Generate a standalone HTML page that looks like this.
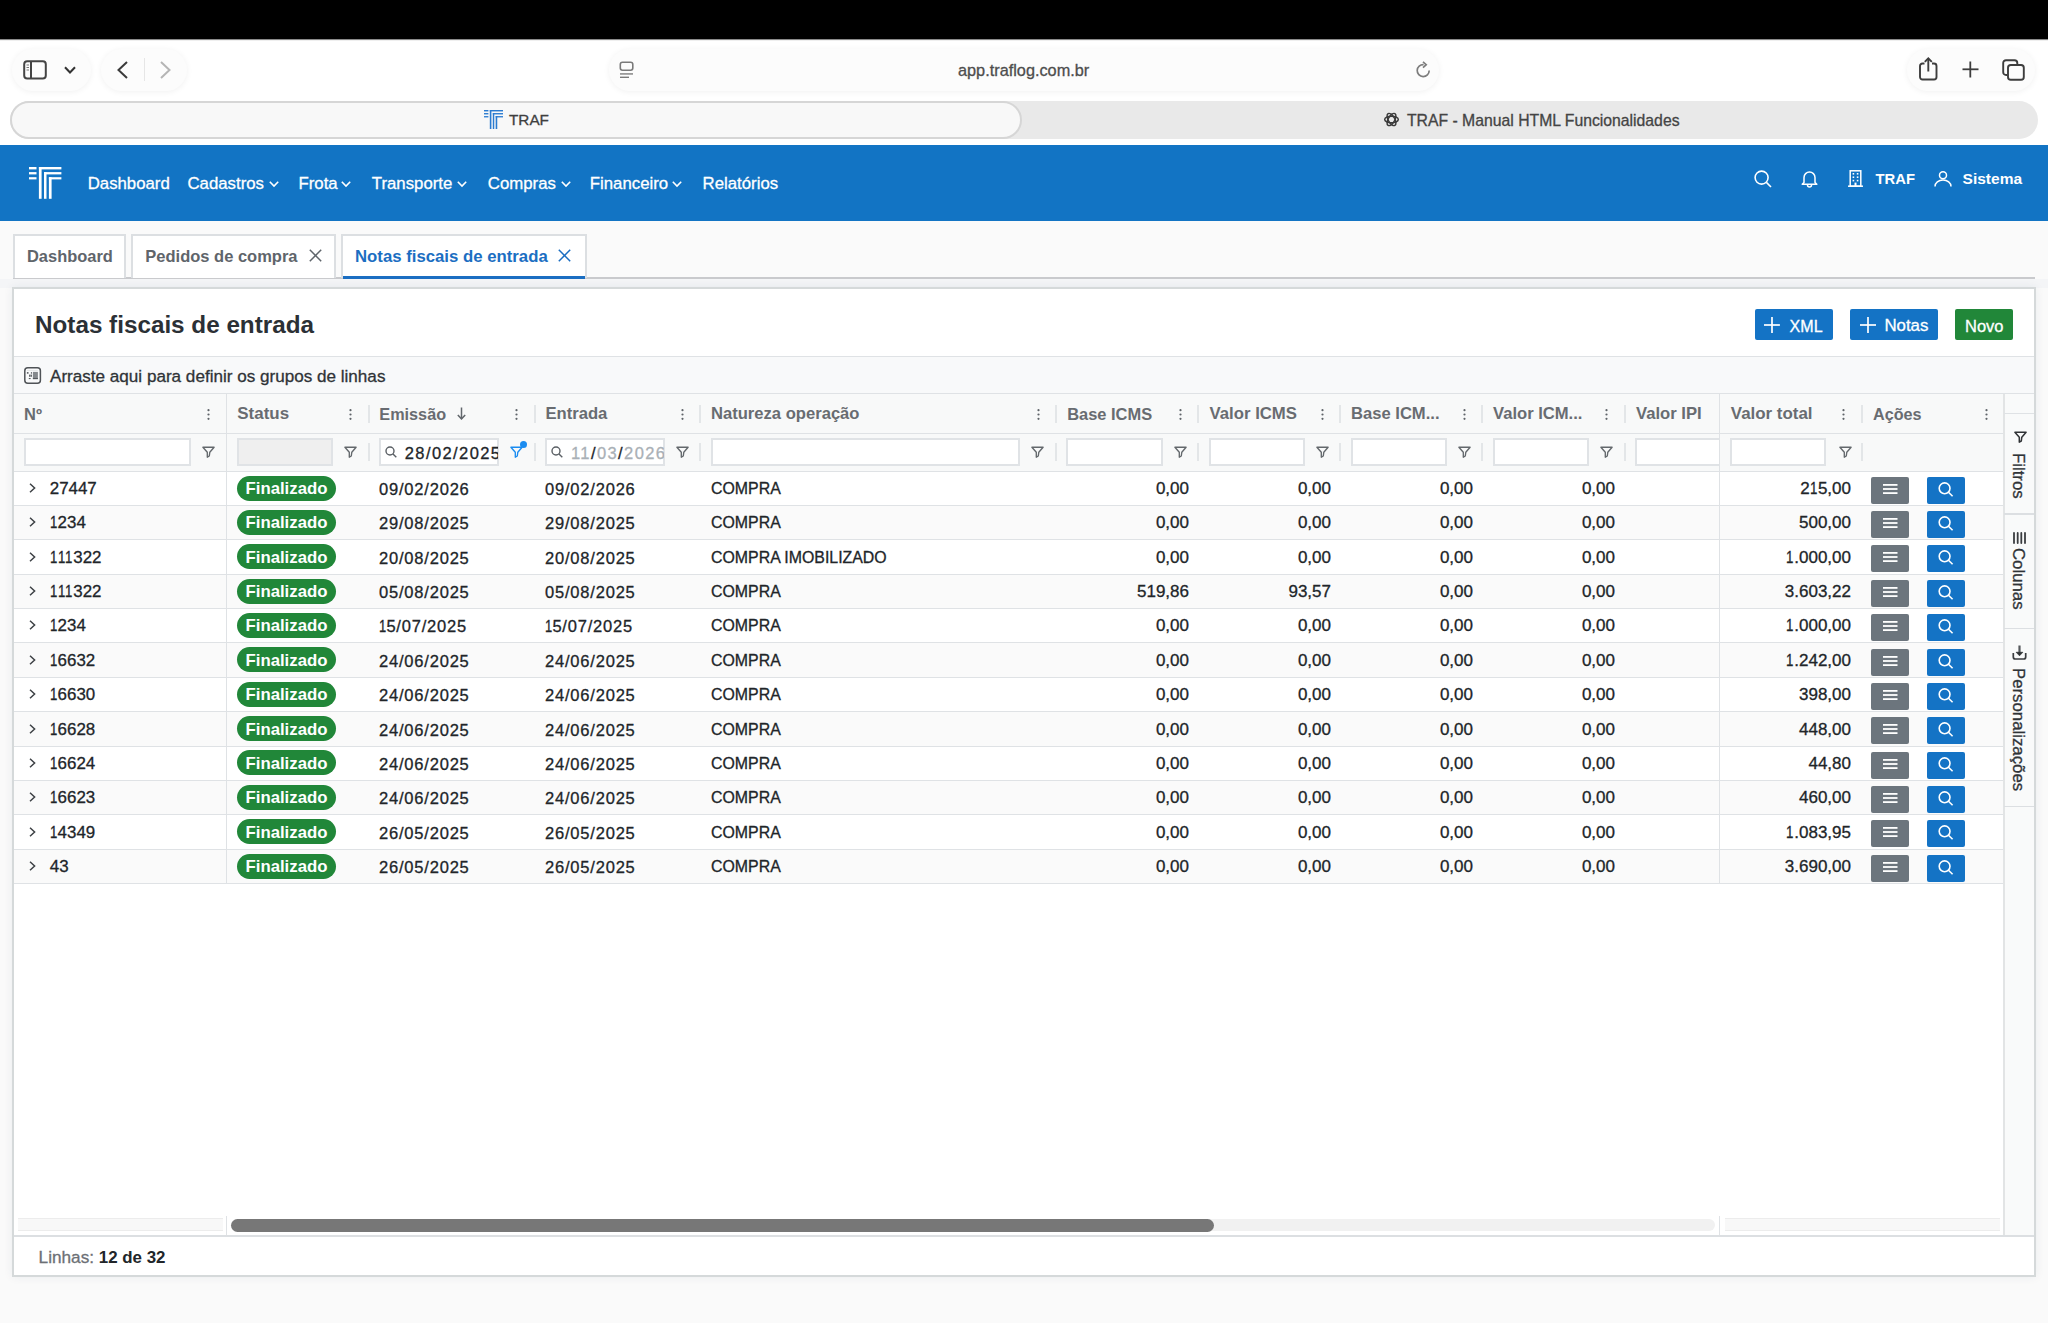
<!DOCTYPE html><html><head><meta charset="utf-8"><style>
*{box-sizing:border-box;margin:0;padding:0}
html,body{width:2048px;height:1323px;overflow:hidden;background:#fafafa;font-family:"Liberation Sans",sans-serif;color:#212529}
.a{position:absolute}
.t{position:absolute;white-space:nowrap;line-height:20px;height:20px;-webkit-text-stroke-width:0.3px}
[style*="font-weight:700"]{-webkit-text-stroke-width:0}
svg{position:absolute;overflow:visible}
</style></head><body><div class="a" style="left:0;top:0;width:2048px;height:39px;background:#000"></div>
<div class="a" style="left:0;top:39px;width:2048px;height:106px;background:#fff"></div>
<div class="a" style="left:0;top:39px;width:2048px;height:1px;background:#8a8a8a"></div>
<div class="a" style="left:0;top:40px;width:2048px;height:1px;background:#efefef"></div>
<div class="a" style="left:12px;top:49px;width:79px;height:42px;border-radius:21.0px;background:#fcfcfc;box-shadow:0 1px 6px rgba(0,0,0,0.06)"></div>
<div class="a" style="left:101px;top:49px;width:86px;height:42px;border-radius:21.0px;background:#fcfcfc;box-shadow:0 1px 6px rgba(0,0,0,0.06)"></div>
<div class="a" style="left:609px;top:49px;width:830px;height:42px;border-radius:21.0px;background:#fcfcfc;box-shadow:0 1px 6px rgba(0,0,0,0.06)"></div>
<div class="a" style="left:1907px;top:49px;width:128px;height:42px;border-radius:21.0px;background:#fcfcfc;box-shadow:0 1px 6px rgba(0,0,0,0.06)"></div>
<svg style="left:23px;top:60px" width="24" height="20" viewBox="0 0 24 20">
<rect x="1.2" y="1.2" width="21.6" height="17.2" rx="3" fill="none" stroke="#444" stroke-width="2"/>
<line x1="8" y1="1.5" x2="8" y2="18.5" stroke="#444" stroke-width="2"/>
<line x1="3.5" y1="5" x2="6" y2="5" stroke="#777" stroke-width="1"/>
<line x1="3.5" y1="7.5" x2="6" y2="7.5" stroke="#777" stroke-width="1"/>
<line x1="3.5" y1="10" x2="6" y2="10" stroke="#777" stroke-width="1"/>
</svg>
<svg style="left:64px;top:66px" width="12" height="8" viewBox="0 0 12 8"><polyline points="1,1.2 6,6.5 11,1.2" fill="none" stroke="#333" stroke-width="2"/></svg>
<svg style="left:117px;top:61px" width="11" height="18" viewBox="0 0 11 18"><polyline points="10,1 1.5,9 10,17" fill="none" stroke="#3a3a3a" stroke-width="2"/></svg>
<div class="a" style="left:144px;top:58px;width:1px;height:23px;background:#e6e6e6"></div>
<svg style="left:160px;top:61px" width="11" height="18" viewBox="0 0 11 18"><polyline points="1,1 9.5,9 1,17" fill="none" stroke="#b5b5b5" stroke-width="2"/></svg>
<svg style="left:619px;top:61px" width="16" height="18" viewBox="0 0 16 18">
<rect x="1.3" y="1.3" width="12.5" height="8" rx="2.2" fill="none" stroke="#7a7a7a" stroke-width="1.6"/>
<rect x="1" y="12" width="13" height="1.8" fill="#9a9a9a"/>
<rect x="1" y="15.6" width="9" height="1.4" fill="#7a7a7a"/>
</svg>
<div class="t" style="left:958px;top:60px;font-size:16.3px;color:#4d4d4d">app.traflog.com.br</div>
<svg style="left:1415px;top:61px" width="18" height="18" viewBox="0 0 18 18">
<path d="M14.2 9.6 A6 6 0 1 1 8.6 3.6" fill="none" stroke="#7d7d7d" stroke-width="1.7"/>
<polyline points="8,0.8 11.2,3.7 8,6.6" fill="none" stroke="#7d7d7d" stroke-width="1.7"/>
</svg>
<svg style="left:1919px;top:57px" width="19" height="24" viewBox="0 0 19 24">
<path d="M5.5 6.5 H3.5 A2.5 2.5 0 0 0 1 9 V20 A2.5 2.5 0 0 0 3.5 22.5 H15 A2.5 2.5 0 0 0 17.5 20 V9 A2.5 2.5 0 0 0 15 6.5 H13" fill="none" stroke="#3d3d3d" stroke-width="1.9"/>
<line x1="9.3" y1="1.5" x2="9.3" y2="14.5" stroke="#3d3d3d" stroke-width="1.9"/>
<polyline points="5.8,4.8 9.3,1.3 12.8,4.8" fill="none" stroke="#3d3d3d" stroke-width="1.9"/>
</svg>
<svg style="left:1962px;top:61px" width="17" height="17" viewBox="0 0 17 17"><line x1="8.3" y1="0.5" x2="8.3" y2="16.5" stroke="#3d3d3d" stroke-width="1.8"/><line x1="0.5" y1="8.3" x2="16.5" y2="8.3" stroke="#3d3d3d" stroke-width="1.8"/></svg>
<svg style="left:2002px;top:59px" width="23" height="22" viewBox="0 0 23 22">
<path d="M5 16 H4 A2.8 2.8 0 0 1 1.2 13.2 V4 A2.8 2.8 0 0 1 4 1.2 H12.5 A2.8 2.8 0 0 1 15.3 4 V5" fill="none" stroke="#3d3d3d" stroke-width="1.9"/>
<rect x="6" y="6" width="15.8" height="14.8" rx="2.8" fill="none" stroke="#3d3d3d" stroke-width="1.9"/>
</svg>
<div class="a" style="left:10px;top:101px;width:2028px;height:38px;border-radius:19px;background:#e9e9e9"></div>
<div class="a" style="left:10px;top:101px;width:1012px;height:38px;border-radius:19px;background:#f8f8f8;border:2px solid #d6d6d6"></div>
<svg style="left:484px;top:110px" width="19" height="19" viewBox="0 0 32.4 31.8" preserveAspectRatio="none">
<g fill="#2a7bd0">
<rect x="0" y="0" width="7.5" height="2.4"/>
<rect x="0" y="5.1" width="7.5" height="2.3"/>
<rect x="0" y="10.2" width="7.5" height="2.2"/>
<rect x="9.9" y="0" width="22.5" height="2.4"/>
<rect x="9.9" y="0" width="2.7" height="31.8"/>
<rect x="15" y="5.1" width="17.4" height="2.3"/>
<rect x="15" y="5.1" width="2.5" height="26.7"/>
<rect x="19.9" y="10.2" width="12.5" height="2.2"/>
<rect x="19.9" y="10.2" width="2.7" height="21.6"/>
</g></svg>
<div class="t" style="left:509px;top:110px;font-size:15.3px;color:#3f3f3f">TRAF</div>
<svg style="left:1383px;top:111px" width="17" height="17" viewBox="0 0 24 24">
<g fill="none" stroke="#3a3a3a" stroke-width="2.1">
<ellipse cx="12" cy="12" rx="4.6" ry="9.6" transform="rotate(30 12 12)"/>
<ellipse cx="12" cy="12" rx="4.6" ry="9.6" transform="rotate(90 12 12)"/>
<ellipse cx="12" cy="12" rx="4.6" ry="9.6" transform="rotate(150 12 12)"/>
</g></svg>
<div class="t" style="left:1407px;top:111px;font-size:15.75px;color:#444">TRAF - Manual HTML Funcionalidades</div>
<div class="a" style="left:0;top:145px;width:2048px;height:76px;background:#1274c4"></div>
<svg style="left:29.4px;top:167px" width="32.4" height="31.8" viewBox="0 0 32.4 31.8" preserveAspectRatio="none">
<g fill="#fff">
<rect x="0" y="0" width="7.5" height="2.4"/>
<rect x="0" y="5.1" width="7.5" height="2.3"/>
<rect x="0" y="10.2" width="7.5" height="2.2"/>
<rect x="9.9" y="0" width="22.5" height="2.4"/>
<rect x="9.9" y="0" width="2.7" height="31.8"/>
<rect x="15" y="5.1" width="17.4" height="2.3"/>
<rect x="15" y="5.1" width="2.5" height="26.7"/>
<rect x="19.9" y="10.2" width="12.5" height="2.2"/>
<rect x="19.9" y="10.2" width="2.7" height="21.6"/>
</g></svg>
<div class="t" id="nav_Dashboard" style="left:87.7px;top:173.5px;font-size:16.8px;color:#fff">Dashboard</div>
<div class="t" id="nav_Cadastros" style="left:187.5px;top:173.5px;font-size:16.8px;color:#fff">Cadastros</div>
<div class="t" id="nav_Frota" style="left:298.5px;top:173.5px;font-size:16.8px;color:#fff">Frota</div>
<div class="t" id="nav_Transporte" style="left:371.8px;top:173.5px;font-size:16.8px;color:#fff">Transporte</div>
<div class="t" id="nav_Compras" style="left:487.8px;top:173.5px;font-size:16.8px;color:#fff">Compras</div>
<div class="t" id="nav_Financeiro" style="left:589.8px;top:173.5px;font-size:16.8px;color:#fff">Financeiro</div>
<div class="t" id="nav_Relatórios" style="left:702.6px;top:173.5px;font-size:16.8px;color:#fff">Relatórios</div>
<svg style="left:268.8px;top:181px" width="10" height="6" viewBox="0 0 10 6"><polyline points="0.8,0.8 5,5 9.2,0.8" fill="none" stroke="#fff" stroke-width="1.6"/></svg>
<svg style="left:341px;top:181px" width="10" height="6" viewBox="0 0 10 6"><polyline points="0.8,0.8 5,5 9.2,0.8" fill="none" stroke="#fff" stroke-width="1.6"/></svg>
<svg style="left:457px;top:181px" width="10" height="6" viewBox="0 0 10 6"><polyline points="0.8,0.8 5,5 9.2,0.8" fill="none" stroke="#fff" stroke-width="1.6"/></svg>
<svg style="left:561px;top:181px" width="10" height="6" viewBox="0 0 10 6"><polyline points="0.8,0.8 5,5 9.2,0.8" fill="none" stroke="#fff" stroke-width="1.6"/></svg>
<svg style="left:672px;top:181px" width="10" height="6" viewBox="0 0 10 6"><polyline points="0.8,0.8 5,5 9.2,0.8" fill="none" stroke="#fff" stroke-width="1.6"/></svg>
<svg style="left:1754px;top:170px" width="18" height="18" viewBox="0 0 18 18"><circle cx="7.6" cy="7.6" r="6.5" fill="none" stroke="#fff" stroke-width="1.6"/><line x1="12.4" y1="12.4" x2="17" y2="17" stroke="#fff" stroke-width="1.6"/></svg>
<svg style="left:1801px;top:170px" width="17" height="17" viewBox="0 0 17 17"><path d="M3 12.5 V7.5 A5.5 5.5 0 0 1 14 7.5 V12.5 L15.8 14.3 H1.2 Z" fill="none" stroke="#fff" stroke-width="1.5" stroke-linejoin="round"/><path d="M6.5 15 A2 2 0 0 0 10.5 15" fill="none" stroke="#fff" stroke-width="1.5"/></svg>
<svg style="left:1848px;top:170px" width="15" height="17" viewBox="0 0 15 17"><rect x="2.2" y="0.8" width="10.6" height="15.4" fill="none" stroke="#fff" stroke-width="1.5"/><line x1="0" y1="16.2" x2="15" y2="16.2" stroke="#fff" stroke-width="1.5"/>
<g fill="#fff"><rect x="4.6" y="3" width="1.6" height="1.6"/><rect x="8.8" y="3" width="1.6" height="1.6"/><rect x="4.6" y="6.4" width="1.6" height="1.6"/><rect x="8.8" y="6.4" width="1.6" height="1.6"/><rect x="4.6" y="9.8" width="1.6" height="1.6"/><rect x="8.8" y="9.8" width="1.6" height="1.6"/><rect x="6.5" y="12.6" width="2" height="3.6"/></g></svg>
<div class="t" style="left:1875.5px;top:169px;font-size:14.8px;font-weight:700;color:#fff">TRAF</div>
<svg style="left:1934px;top:171px" width="18" height="16" viewBox="0 0 18 16"><circle cx="9" cy="4.3" r="3.5" fill="none" stroke="#fff" stroke-width="1.5"/><path d="M1 15.5 A8 6.5 0 0 1 17 15.5" fill="none" stroke="#fff" stroke-width="1.5"/></svg>
<div class="t" style="left:1962.6px;top:169px;font-size:15.5px;font-weight:700;color:#fff">Sistema</div>
<div class="a" style="left:0;top:279px;width:2048px;height:9px;background:#f4f5f7"></div>
<div class="a" style="left:13px;top:277px;width:2022px;height:2px;background:#c9cacd"></div>
<div class="a" style="left:13px;top:234px;width:113px;height:44px;background:#fff;border:2px solid #dcdfe2;border-bottom:none"></div>
<div class="t" style="left:27px;top:246px;font-size:16.46px;font-weight:700;color:#5f656b">Dashboard</div>
<div class="a" style="left:131px;top:234px;width:205px;height:44px;background:#fff;border:2px solid #dcdfe2;border-bottom:none"></div>
<div class="t" style="left:145.3px;top:246px;font-size:16.5px;font-weight:700;color:#5f656b">Pedidos de compra</div>
<svg style="left:308.7px;top:249px" width="13" height="13" viewBox="0 0 13 13"><line x1="0.8" y1="0.8" x2="12.2" y2="12.2" stroke="#5f656b" stroke-width="1.5"/><line x1="12.2" y1="0.8" x2="0.8" y2="12.2" stroke="#5f656b" stroke-width="1.5"/></svg>
<div class="a" style="left:341px;top:234px;width:246px;height:44px;background:#fff;border:2px solid #dcdfe2;border-bottom:none"></div>
<div class="t" style="left:355px;top:246.5px;font-size:16.75px;font-weight:700;color:#1b6ec2">Notas fiscais de entrada</div>
<svg style="left:557.5px;top:249px" width="13" height="13" viewBox="0 0 13 13"><line x1="0.8" y1="0.8" x2="12.2" y2="12.2" stroke="#1b6ec2" stroke-width="1.5"/><line x1="12.2" y1="0.8" x2="0.8" y2="12.2" stroke="#1b6ec2" stroke-width="1.5"/></svg>
<div class="a" style="left:343px;top:276px;width:242px;height:2.5px;background:#1b6ec2"></div>
<div class="a" style="left:12px;top:287px;width:2024px;height:990px;background:#fff;border:2px solid #d5d9da;box-shadow:0 0 9px rgba(30,50,90,0.07)"></div>
<div class="t" style="left:35px;top:313px;font-size:24.25px;line-height:24px;height:24px;font-weight:700;color:#2b3035">Notas fiscais de entrada</div>
<div class="a" style="left:1755px;top:309px;width:78px;height:31px;background:#1473c5;border-radius:2px"></div>
<svg style="left:1763.5px;top:317px" width="16" height="16" viewBox="0 0 16 16"><line x1="8" y1="0" x2="8" y2="16" stroke="#fff" stroke-width="1.7"/><line x1="0" y1="8" x2="16" y2="8" stroke="#fff" stroke-width="1.7"/></svg>
<div class="t" style="left:1789.6px;top:315.6px;font-size:16.05px;color:#fff">XML</div>
<div class="a" style="left:1850px;top:309px;width:88px;height:31px;background:#1473c5;border-radius:2px"></div>
<svg style="left:1859.5px;top:317px" width="16" height="16" viewBox="0 0 16 16"><line x1="8" y1="0" x2="8" y2="16" stroke="#fff" stroke-width="1.7"/><line x1="0" y1="8" x2="16" y2="8" stroke="#fff" stroke-width="1.7"/></svg>
<div class="t" style="left:1884.4px;top:315.6px;font-size:16.84px;color:#fff">Notas</div>
<div class="a" style="left:1955px;top:309px;width:58px;height:31px;background:#218739;border-radius:2px"></div>
<div class="t" style="left:1965px;top:315.6px;font-size:16.49px;color:#fff">Novo</div>
<div class="a" style="left:14px;top:356px;width:2020px;height:1px;background:#dfe2e5"></div>
<div class="a" style="left:14px;top:357px;width:2020px;height:37px;background:#f8f9fa"></div>
<svg style="left:24px;top:367px" width="17" height="17" viewBox="0 0 17 17"><rect x="0.8" y="0.8" width="15.6" height="15.4" rx="3" fill="none" stroke="#4f5357" stroke-width="1.5"/><rect x="2.9" y="3" width="10.9" height="0.5" fill="#d6d8da"/><rect x="8.9" y="4.9" width="5" height="7.2" fill="#85898d"/><rect x="8.9" y="11" width="5" height="1.1" fill="#55595e"/><g fill="#55595e"><rect x="2.9" y="5.1" width="1.6" height="1.6"/><rect x="6.9" y="5.1" width="1" height="1.6"/><rect x="5.1" y="7.6" width="1.5" height="2.2"/><rect x="6.9" y="7.6" width="1" height="2.2"/><rect x="4.8" y="11" width="1.8" height="1.1"/></g></svg>
<div class="t" style="left:50px;top:367px;font-size:17.1px;color:#2f3337">Arraste aqui para definir os grupos de linhas</div>
<div class="a" style="left:14px;top:393px;width:2020px;height:1px;background:#dfe2e5"></div>
<div class="a" style="left:14px;top:394px;width:1990px;height:77px;background:#f8f9f9"></div>
<div class="a" style="left:14px;top:432.5px;width:1990px;height:1px;background:#dfe2e5"></div>
<div class="a" style="left:14px;top:471.08px;width:1990px;height:34.37px;background:#fff"></div>
<svg style="left:29px;top:482.96px" width="7" height="10" viewBox="0 0 7 10"><polyline points="1,0.8 5.6,5 1,9.2" fill="none" stroke="#3d4145" stroke-width="1.5"/></svg>
<div class="t" style="left:49.8px;top:478.96px;font-size:16.9px;color:#212529">27447</div>
<div class="a" style="left:237px;top:475.56px;width:99px;height:25px;border-radius:12.5px;background:#218739"></div>
<div class="t" style="left:245.5px;top:478.96px;font-size:16.77px;font-weight:700;color:#fff">Finalizado</div>
<div class="t" style="left:379px;top:478.96px;font-size:16.5px;letter-spacing:0.8px;color:#212529">09/02/2026</div>
<div class="t" style="left:545px;top:478.96px;font-size:16.5px;letter-spacing:0.8px;color:#212529">09/02/2026</div>
<div class="t" style="left:711px;top:478.96px;font-size:15.9px;color:#212529">COMPRA</div>
<div class="t" style="right:859px;top:478.96px;font-size:17px;color:#212529">0,00</div>
<div class="t" style="right:717px;top:478.96px;font-size:17px;color:#212529">0,00</div>
<div class="t" style="right:575px;top:478.96px;font-size:17px;color:#212529">0,00</div>
<div class="t" style="right:433px;top:478.96px;font-size:17px;color:#212529">0,00</div>
<div class="t" style="right:197px;top:478.96px;font-size:17px;color:#212529">2<span style="display:inline-block;transform:scaleX(0.78);transform-origin:0 50%;margin-right:-1.3px">1</span>5,00</div>
<div class="a" style="left:1871px;top:476.76px;width:38px;height:27px;background:#6c757d;border-radius:2px"></div>
<svg style="left:1883px;top:483.76px" width="15" height="10" viewBox="0 0 15 10"><g fill="#fff"><rect x="0" y="0" width="14.5" height="1.8"/><rect x="0" y="4.1" width="14.5" height="1.8"/><rect x="0" y="8.2" width="14.5" height="1.8"/></g></svg>
<div class="a" style="left:1927px;top:476.76px;width:38px;height:27px;background:#1473c5;border-radius:2px"></div>
<svg style="left:1938px;top:481.76px" width="16" height="16" viewBox="0 0 16 16"><circle cx="6.6" cy="6.3" r="5.4" fill="none" stroke="#fff" stroke-width="1.6"/><line x1="10.5" y1="10.2" x2="14.6" y2="14.3" stroke="#fff" stroke-width="1.6"/></svg>
<div class="a" style="left:14px;top:505.44px;width:1990px;height:34.37px;background:#fafafa"></div>
<svg style="left:29px;top:517.33px" width="7" height="10" viewBox="0 0 7 10"><polyline points="1,0.8 5.6,5 1,9.2" fill="none" stroke="#3d4145" stroke-width="1.5"/></svg>
<div class="t" style="left:49.8px;top:513.33px;font-size:16.9px;color:#212529"><span style="display:inline-block;transform:scaleX(0.78);transform-origin:0 50%;margin-right:-1.6px">1</span>234</div>
<div class="a" style="left:237px;top:509.93px;width:99px;height:25px;border-radius:12.5px;background:#218739"></div>
<div class="t" style="left:245.5px;top:513.33px;font-size:16.77px;font-weight:700;color:#fff">Finalizado</div>
<div class="t" style="left:379px;top:513.33px;font-size:16.5px;letter-spacing:0.8px;color:#212529">29/08/2025</div>
<div class="t" style="left:545px;top:513.33px;font-size:16.5px;letter-spacing:0.8px;color:#212529">29/08/2025</div>
<div class="t" style="left:711px;top:513.33px;font-size:15.9px;color:#212529">COMPRA</div>
<div class="t" style="right:859px;top:513.33px;font-size:17px;color:#212529">0,00</div>
<div class="t" style="right:717px;top:513.33px;font-size:17px;color:#212529">0,00</div>
<div class="t" style="right:575px;top:513.33px;font-size:17px;color:#212529">0,00</div>
<div class="t" style="right:433px;top:513.33px;font-size:17px;color:#212529">0,00</div>
<div class="t" style="right:197px;top:513.33px;font-size:17px;color:#212529">500,00</div>
<div class="a" style="left:1871px;top:511.13px;width:38px;height:27px;background:#6c757d;border-radius:2px"></div>
<svg style="left:1883px;top:518.13px" width="15" height="10" viewBox="0 0 15 10"><g fill="#fff"><rect x="0" y="0" width="14.5" height="1.8"/><rect x="0" y="4.1" width="14.5" height="1.8"/><rect x="0" y="8.2" width="14.5" height="1.8"/></g></svg>
<div class="a" style="left:1927px;top:511.13px;width:38px;height:27px;background:#1473c5;border-radius:2px"></div>
<svg style="left:1938px;top:516.13px" width="16" height="16" viewBox="0 0 16 16"><circle cx="6.6" cy="6.3" r="5.4" fill="none" stroke="#fff" stroke-width="1.6"/><line x1="10.5" y1="10.2" x2="14.6" y2="14.3" stroke="#fff" stroke-width="1.6"/></svg>
<div class="a" style="left:14px;top:539.81px;width:1990px;height:34.37px;background:#fff"></div>
<svg style="left:29px;top:551.69px" width="7" height="10" viewBox="0 0 7 10"><polyline points="1,0.8 5.6,5 1,9.2" fill="none" stroke="#3d4145" stroke-width="1.5"/></svg>
<div class="t" style="left:49.8px;top:547.69px;font-size:16.9px;color:#212529"><span style="display:inline-block;transform:scaleX(0.78);transform-origin:0 50%;margin-right:-1.6px">1</span><span style="display:inline-block;transform:scaleX(0.78);transform-origin:0 50%;margin-right:-1.6px">1</span><span style="display:inline-block;transform:scaleX(0.78);transform-origin:0 50%;margin-right:-1.6px">1</span>322</div>
<div class="a" style="left:237px;top:544.29px;width:99px;height:25px;border-radius:12.5px;background:#218739"></div>
<div class="t" style="left:245.5px;top:547.69px;font-size:16.77px;font-weight:700;color:#fff">Finalizado</div>
<div class="t" style="left:379px;top:547.69px;font-size:16.5px;letter-spacing:0.8px;color:#212529">20/08/2025</div>
<div class="t" style="left:545px;top:547.69px;font-size:16.5px;letter-spacing:0.8px;color:#212529">20/08/2025</div>
<div class="t" style="left:711px;top:547.69px;font-size:15.9px;color:#212529">COMPRA IMOBILIZADO</div>
<div class="t" style="right:859px;top:547.69px;font-size:17px;color:#212529">0,00</div>
<div class="t" style="right:717px;top:547.69px;font-size:17px;color:#212529">0,00</div>
<div class="t" style="right:575px;top:547.69px;font-size:17px;color:#212529">0,00</div>
<div class="t" style="right:433px;top:547.69px;font-size:17px;color:#212529">0,00</div>
<div class="t" style="right:197px;top:547.69px;font-size:17px;color:#212529"><span style="display:inline-block;transform:scaleX(0.78);transform-origin:0 50%;margin-right:-1.3px">1</span>.000,00</div>
<div class="a" style="left:1871px;top:545.49px;width:38px;height:27px;background:#6c757d;border-radius:2px"></div>
<svg style="left:1883px;top:552.49px" width="15" height="10" viewBox="0 0 15 10"><g fill="#fff"><rect x="0" y="0" width="14.5" height="1.8"/><rect x="0" y="4.1" width="14.5" height="1.8"/><rect x="0" y="8.2" width="14.5" height="1.8"/></g></svg>
<div class="a" style="left:1927px;top:545.49px;width:38px;height:27px;background:#1473c5;border-radius:2px"></div>
<svg style="left:1938px;top:550.49px" width="16" height="16" viewBox="0 0 16 16"><circle cx="6.6" cy="6.3" r="5.4" fill="none" stroke="#fff" stroke-width="1.6"/><line x1="10.5" y1="10.2" x2="14.6" y2="14.3" stroke="#fff" stroke-width="1.6"/></svg>
<div class="a" style="left:14px;top:574.17px;width:1990px;height:34.37px;background:#fafafa"></div>
<svg style="left:29px;top:586.06px" width="7" height="10" viewBox="0 0 7 10"><polyline points="1,0.8 5.6,5 1,9.2" fill="none" stroke="#3d4145" stroke-width="1.5"/></svg>
<div class="t" style="left:49.8px;top:582.06px;font-size:16.9px;color:#212529"><span style="display:inline-block;transform:scaleX(0.78);transform-origin:0 50%;margin-right:-1.6px">1</span><span style="display:inline-block;transform:scaleX(0.78);transform-origin:0 50%;margin-right:-1.6px">1</span><span style="display:inline-block;transform:scaleX(0.78);transform-origin:0 50%;margin-right:-1.6px">1</span>322</div>
<div class="a" style="left:237px;top:578.66px;width:99px;height:25px;border-radius:12.5px;background:#218739"></div>
<div class="t" style="left:245.5px;top:582.06px;font-size:16.77px;font-weight:700;color:#fff">Finalizado</div>
<div class="t" style="left:379px;top:582.06px;font-size:16.5px;letter-spacing:0.8px;color:#212529">05/08/2025</div>
<div class="t" style="left:545px;top:582.06px;font-size:16.5px;letter-spacing:0.8px;color:#212529">05/08/2025</div>
<div class="t" style="left:711px;top:582.06px;font-size:15.9px;color:#212529">COMPRA</div>
<div class="t" style="right:859px;top:582.06px;font-size:17px;color:#212529">519,86</div>
<div class="t" style="right:717px;top:582.06px;font-size:17px;color:#212529">93,57</div>
<div class="t" style="right:575px;top:582.06px;font-size:17px;color:#212529">0,00</div>
<div class="t" style="right:433px;top:582.06px;font-size:17px;color:#212529">0,00</div>
<div class="t" style="right:197px;top:582.06px;font-size:17px;color:#212529">3.603,22</div>
<div class="a" style="left:1871px;top:579.86px;width:38px;height:27px;background:#6c757d;border-radius:2px"></div>
<svg style="left:1883px;top:586.86px" width="15" height="10" viewBox="0 0 15 10"><g fill="#fff"><rect x="0" y="0" width="14.5" height="1.8"/><rect x="0" y="4.1" width="14.5" height="1.8"/><rect x="0" y="8.2" width="14.5" height="1.8"/></g></svg>
<div class="a" style="left:1927px;top:579.86px;width:38px;height:27px;background:#1473c5;border-radius:2px"></div>
<svg style="left:1938px;top:584.86px" width="16" height="16" viewBox="0 0 16 16"><circle cx="6.6" cy="6.3" r="5.4" fill="none" stroke="#fff" stroke-width="1.6"/><line x1="10.5" y1="10.2" x2="14.6" y2="14.3" stroke="#fff" stroke-width="1.6"/></svg>
<div class="a" style="left:14px;top:608.54px;width:1990px;height:34.37px;background:#fff"></div>
<svg style="left:29px;top:620.42px" width="7" height="10" viewBox="0 0 7 10"><polyline points="1,0.8 5.6,5 1,9.2" fill="none" stroke="#3d4145" stroke-width="1.5"/></svg>
<div class="t" style="left:49.8px;top:616.42px;font-size:16.9px;color:#212529"><span style="display:inline-block;transform:scaleX(0.78);transform-origin:0 50%;margin-right:-1.6px">1</span>234</div>
<div class="a" style="left:237px;top:613.02px;width:99px;height:25px;border-radius:12.5px;background:#218739"></div>
<div class="t" style="left:245.5px;top:616.42px;font-size:16.77px;font-weight:700;color:#fff">Finalizado</div>
<div class="t" style="left:379px;top:616.42px;font-size:16.5px;letter-spacing:0.8px;color:#212529"><span style="display:inline-block;transform:scaleX(0.78);transform-origin:0 50%;margin-right:-2.6px">1</span>5/07/2025</div>
<div class="t" style="left:545px;top:616.42px;font-size:16.5px;letter-spacing:0.8px;color:#212529"><span style="display:inline-block;transform:scaleX(0.78);transform-origin:0 50%;margin-right:-2.6px">1</span>5/07/2025</div>
<div class="t" style="left:711px;top:616.42px;font-size:15.9px;color:#212529">COMPRA</div>
<div class="t" style="right:859px;top:616.42px;font-size:17px;color:#212529">0,00</div>
<div class="t" style="right:717px;top:616.42px;font-size:17px;color:#212529">0,00</div>
<div class="t" style="right:575px;top:616.42px;font-size:17px;color:#212529">0,00</div>
<div class="t" style="right:433px;top:616.42px;font-size:17px;color:#212529">0,00</div>
<div class="t" style="right:197px;top:616.42px;font-size:17px;color:#212529"><span style="display:inline-block;transform:scaleX(0.78);transform-origin:0 50%;margin-right:-1.3px">1</span>.000,00</div>
<div class="a" style="left:1871px;top:614.22px;width:38px;height:27px;background:#6c757d;border-radius:2px"></div>
<svg style="left:1883px;top:621.22px" width="15" height="10" viewBox="0 0 15 10"><g fill="#fff"><rect x="0" y="0" width="14.5" height="1.8"/><rect x="0" y="4.1" width="14.5" height="1.8"/><rect x="0" y="8.2" width="14.5" height="1.8"/></g></svg>
<div class="a" style="left:1927px;top:614.22px;width:38px;height:27px;background:#1473c5;border-radius:2px"></div>
<svg style="left:1938px;top:619.22px" width="16" height="16" viewBox="0 0 16 16"><circle cx="6.6" cy="6.3" r="5.4" fill="none" stroke="#fff" stroke-width="1.6"/><line x1="10.5" y1="10.2" x2="14.6" y2="14.3" stroke="#fff" stroke-width="1.6"/></svg>
<div class="a" style="left:14px;top:642.90px;width:1990px;height:34.37px;background:#fafafa"></div>
<svg style="left:29px;top:654.79px" width="7" height="10" viewBox="0 0 7 10"><polyline points="1,0.8 5.6,5 1,9.2" fill="none" stroke="#3d4145" stroke-width="1.5"/></svg>
<div class="t" style="left:49.8px;top:650.79px;font-size:16.9px;color:#212529"><span style="display:inline-block;transform:scaleX(0.78);transform-origin:0 50%;margin-right:-1.6px">1</span>6632</div>
<div class="a" style="left:237px;top:647.39px;width:99px;height:25px;border-radius:12.5px;background:#218739"></div>
<div class="t" style="left:245.5px;top:650.79px;font-size:16.77px;font-weight:700;color:#fff">Finalizado</div>
<div class="t" style="left:379px;top:650.79px;font-size:16.5px;letter-spacing:0.8px;color:#212529">24/06/2025</div>
<div class="t" style="left:545px;top:650.79px;font-size:16.5px;letter-spacing:0.8px;color:#212529">24/06/2025</div>
<div class="t" style="left:711px;top:650.79px;font-size:15.9px;color:#212529">COMPRA</div>
<div class="t" style="right:859px;top:650.79px;font-size:17px;color:#212529">0,00</div>
<div class="t" style="right:717px;top:650.79px;font-size:17px;color:#212529">0,00</div>
<div class="t" style="right:575px;top:650.79px;font-size:17px;color:#212529">0,00</div>
<div class="t" style="right:433px;top:650.79px;font-size:17px;color:#212529">0,00</div>
<div class="t" style="right:197px;top:650.79px;font-size:17px;color:#212529"><span style="display:inline-block;transform:scaleX(0.78);transform-origin:0 50%;margin-right:-1.3px">1</span>.242,00</div>
<div class="a" style="left:1871px;top:648.59px;width:38px;height:27px;background:#6c757d;border-radius:2px"></div>
<svg style="left:1883px;top:655.59px" width="15" height="10" viewBox="0 0 15 10"><g fill="#fff"><rect x="0" y="0" width="14.5" height="1.8"/><rect x="0" y="4.1" width="14.5" height="1.8"/><rect x="0" y="8.2" width="14.5" height="1.8"/></g></svg>
<div class="a" style="left:1927px;top:648.59px;width:38px;height:27px;background:#1473c5;border-radius:2px"></div>
<svg style="left:1938px;top:653.59px" width="16" height="16" viewBox="0 0 16 16"><circle cx="6.6" cy="6.3" r="5.4" fill="none" stroke="#fff" stroke-width="1.6"/><line x1="10.5" y1="10.2" x2="14.6" y2="14.3" stroke="#fff" stroke-width="1.6"/></svg>
<div class="a" style="left:14px;top:677.27px;width:1990px;height:34.37px;background:#fff"></div>
<svg style="left:29px;top:689.15px" width="7" height="10" viewBox="0 0 7 10"><polyline points="1,0.8 5.6,5 1,9.2" fill="none" stroke="#3d4145" stroke-width="1.5"/></svg>
<div class="t" style="left:49.8px;top:685.15px;font-size:16.9px;color:#212529"><span style="display:inline-block;transform:scaleX(0.78);transform-origin:0 50%;margin-right:-1.6px">1</span>6630</div>
<div class="a" style="left:237px;top:681.75px;width:99px;height:25px;border-radius:12.5px;background:#218739"></div>
<div class="t" style="left:245.5px;top:685.15px;font-size:16.77px;font-weight:700;color:#fff">Finalizado</div>
<div class="t" style="left:379px;top:685.15px;font-size:16.5px;letter-spacing:0.8px;color:#212529">24/06/2025</div>
<div class="t" style="left:545px;top:685.15px;font-size:16.5px;letter-spacing:0.8px;color:#212529">24/06/2025</div>
<div class="t" style="left:711px;top:685.15px;font-size:15.9px;color:#212529">COMPRA</div>
<div class="t" style="right:859px;top:685.15px;font-size:17px;color:#212529">0,00</div>
<div class="t" style="right:717px;top:685.15px;font-size:17px;color:#212529">0,00</div>
<div class="t" style="right:575px;top:685.15px;font-size:17px;color:#212529">0,00</div>
<div class="t" style="right:433px;top:685.15px;font-size:17px;color:#212529">0,00</div>
<div class="t" style="right:197px;top:685.15px;font-size:17px;color:#212529">398,00</div>
<div class="a" style="left:1871px;top:682.95px;width:38px;height:27px;background:#6c757d;border-radius:2px"></div>
<svg style="left:1883px;top:689.95px" width="15" height="10" viewBox="0 0 15 10"><g fill="#fff"><rect x="0" y="0" width="14.5" height="1.8"/><rect x="0" y="4.1" width="14.5" height="1.8"/><rect x="0" y="8.2" width="14.5" height="1.8"/></g></svg>
<div class="a" style="left:1927px;top:682.95px;width:38px;height:27px;background:#1473c5;border-radius:2px"></div>
<svg style="left:1938px;top:687.95px" width="16" height="16" viewBox="0 0 16 16"><circle cx="6.6" cy="6.3" r="5.4" fill="none" stroke="#fff" stroke-width="1.6"/><line x1="10.5" y1="10.2" x2="14.6" y2="14.3" stroke="#fff" stroke-width="1.6"/></svg>
<div class="a" style="left:14px;top:711.63px;width:1990px;height:34.37px;background:#fafafa"></div>
<svg style="left:29px;top:723.52px" width="7" height="10" viewBox="0 0 7 10"><polyline points="1,0.8 5.6,5 1,9.2" fill="none" stroke="#3d4145" stroke-width="1.5"/></svg>
<div class="t" style="left:49.8px;top:719.52px;font-size:16.9px;color:#212529"><span style="display:inline-block;transform:scaleX(0.78);transform-origin:0 50%;margin-right:-1.6px">1</span>6628</div>
<div class="a" style="left:237px;top:716.12px;width:99px;height:25px;border-radius:12.5px;background:#218739"></div>
<div class="t" style="left:245.5px;top:719.52px;font-size:16.77px;font-weight:700;color:#fff">Finalizado</div>
<div class="t" style="left:379px;top:719.52px;font-size:16.5px;letter-spacing:0.8px;color:#212529">24/06/2025</div>
<div class="t" style="left:545px;top:719.52px;font-size:16.5px;letter-spacing:0.8px;color:#212529">24/06/2025</div>
<div class="t" style="left:711px;top:719.52px;font-size:15.9px;color:#212529">COMPRA</div>
<div class="t" style="right:859px;top:719.52px;font-size:17px;color:#212529">0,00</div>
<div class="t" style="right:717px;top:719.52px;font-size:17px;color:#212529">0,00</div>
<div class="t" style="right:575px;top:719.52px;font-size:17px;color:#212529">0,00</div>
<div class="t" style="right:433px;top:719.52px;font-size:17px;color:#212529">0,00</div>
<div class="t" style="right:197px;top:719.52px;font-size:17px;color:#212529">448,00</div>
<div class="a" style="left:1871px;top:717.32px;width:38px;height:27px;background:#6c757d;border-radius:2px"></div>
<svg style="left:1883px;top:724.32px" width="15" height="10" viewBox="0 0 15 10"><g fill="#fff"><rect x="0" y="0" width="14.5" height="1.8"/><rect x="0" y="4.1" width="14.5" height="1.8"/><rect x="0" y="8.2" width="14.5" height="1.8"/></g></svg>
<div class="a" style="left:1927px;top:717.32px;width:38px;height:27px;background:#1473c5;border-radius:2px"></div>
<svg style="left:1938px;top:722.32px" width="16" height="16" viewBox="0 0 16 16"><circle cx="6.6" cy="6.3" r="5.4" fill="none" stroke="#fff" stroke-width="1.6"/><line x1="10.5" y1="10.2" x2="14.6" y2="14.3" stroke="#fff" stroke-width="1.6"/></svg>
<div class="a" style="left:14px;top:746.00px;width:1990px;height:34.37px;background:#fff"></div>
<svg style="left:29px;top:757.88px" width="7" height="10" viewBox="0 0 7 10"><polyline points="1,0.8 5.6,5 1,9.2" fill="none" stroke="#3d4145" stroke-width="1.5"/></svg>
<div class="t" style="left:49.8px;top:753.88px;font-size:16.9px;color:#212529"><span style="display:inline-block;transform:scaleX(0.78);transform-origin:0 50%;margin-right:-1.6px">1</span>6624</div>
<div class="a" style="left:237px;top:750.48px;width:99px;height:25px;border-radius:12.5px;background:#218739"></div>
<div class="t" style="left:245.5px;top:753.88px;font-size:16.77px;font-weight:700;color:#fff">Finalizado</div>
<div class="t" style="left:379px;top:753.88px;font-size:16.5px;letter-spacing:0.8px;color:#212529">24/06/2025</div>
<div class="t" style="left:545px;top:753.88px;font-size:16.5px;letter-spacing:0.8px;color:#212529">24/06/2025</div>
<div class="t" style="left:711px;top:753.88px;font-size:15.9px;color:#212529">COMPRA</div>
<div class="t" style="right:859px;top:753.88px;font-size:17px;color:#212529">0,00</div>
<div class="t" style="right:717px;top:753.88px;font-size:17px;color:#212529">0,00</div>
<div class="t" style="right:575px;top:753.88px;font-size:17px;color:#212529">0,00</div>
<div class="t" style="right:433px;top:753.88px;font-size:17px;color:#212529">0,00</div>
<div class="t" style="right:197px;top:753.88px;font-size:17px;color:#212529">44,80</div>
<div class="a" style="left:1871px;top:751.68px;width:38px;height:27px;background:#6c757d;border-radius:2px"></div>
<svg style="left:1883px;top:758.68px" width="15" height="10" viewBox="0 0 15 10"><g fill="#fff"><rect x="0" y="0" width="14.5" height="1.8"/><rect x="0" y="4.1" width="14.5" height="1.8"/><rect x="0" y="8.2" width="14.5" height="1.8"/></g></svg>
<div class="a" style="left:1927px;top:751.68px;width:38px;height:27px;background:#1473c5;border-radius:2px"></div>
<svg style="left:1938px;top:756.68px" width="16" height="16" viewBox="0 0 16 16"><circle cx="6.6" cy="6.3" r="5.4" fill="none" stroke="#fff" stroke-width="1.6"/><line x1="10.5" y1="10.2" x2="14.6" y2="14.3" stroke="#fff" stroke-width="1.6"/></svg>
<div class="a" style="left:14px;top:780.37px;width:1990px;height:34.37px;background:#fafafa"></div>
<svg style="left:29px;top:792.25px" width="7" height="10" viewBox="0 0 7 10"><polyline points="1,0.8 5.6,5 1,9.2" fill="none" stroke="#3d4145" stroke-width="1.5"/></svg>
<div class="t" style="left:49.8px;top:788.25px;font-size:16.9px;color:#212529"><span style="display:inline-block;transform:scaleX(0.78);transform-origin:0 50%;margin-right:-1.6px">1</span>6623</div>
<div class="a" style="left:237px;top:784.85px;width:99px;height:25px;border-radius:12.5px;background:#218739"></div>
<div class="t" style="left:245.5px;top:788.25px;font-size:16.77px;font-weight:700;color:#fff">Finalizado</div>
<div class="t" style="left:379px;top:788.25px;font-size:16.5px;letter-spacing:0.8px;color:#212529">24/06/2025</div>
<div class="t" style="left:545px;top:788.25px;font-size:16.5px;letter-spacing:0.8px;color:#212529">24/06/2025</div>
<div class="t" style="left:711px;top:788.25px;font-size:15.9px;color:#212529">COMPRA</div>
<div class="t" style="right:859px;top:788.25px;font-size:17px;color:#212529">0,00</div>
<div class="t" style="right:717px;top:788.25px;font-size:17px;color:#212529">0,00</div>
<div class="t" style="right:575px;top:788.25px;font-size:17px;color:#212529">0,00</div>
<div class="t" style="right:433px;top:788.25px;font-size:17px;color:#212529">0,00</div>
<div class="t" style="right:197px;top:788.25px;font-size:17px;color:#212529">460,00</div>
<div class="a" style="left:1871px;top:786.05px;width:38px;height:27px;background:#6c757d;border-radius:2px"></div>
<svg style="left:1883px;top:793.05px" width="15" height="10" viewBox="0 0 15 10"><g fill="#fff"><rect x="0" y="0" width="14.5" height="1.8"/><rect x="0" y="4.1" width="14.5" height="1.8"/><rect x="0" y="8.2" width="14.5" height="1.8"/></g></svg>
<div class="a" style="left:1927px;top:786.05px;width:38px;height:27px;background:#1473c5;border-radius:2px"></div>
<svg style="left:1938px;top:791.05px" width="16" height="16" viewBox="0 0 16 16"><circle cx="6.6" cy="6.3" r="5.4" fill="none" stroke="#fff" stroke-width="1.6"/><line x1="10.5" y1="10.2" x2="14.6" y2="14.3" stroke="#fff" stroke-width="1.6"/></svg>
<div class="a" style="left:14px;top:814.73px;width:1990px;height:34.37px;background:#fff"></div>
<svg style="left:29px;top:826.61px" width="7" height="10" viewBox="0 0 7 10"><polyline points="1,0.8 5.6,5 1,9.2" fill="none" stroke="#3d4145" stroke-width="1.5"/></svg>
<div class="t" style="left:49.8px;top:822.61px;font-size:16.9px;color:#212529"><span style="display:inline-block;transform:scaleX(0.78);transform-origin:0 50%;margin-right:-1.6px">1</span>4349</div>
<div class="a" style="left:237px;top:819.21px;width:99px;height:25px;border-radius:12.5px;background:#218739"></div>
<div class="t" style="left:245.5px;top:822.61px;font-size:16.77px;font-weight:700;color:#fff">Finalizado</div>
<div class="t" style="left:379px;top:822.61px;font-size:16.5px;letter-spacing:0.8px;color:#212529">26/05/2025</div>
<div class="t" style="left:545px;top:822.61px;font-size:16.5px;letter-spacing:0.8px;color:#212529">26/05/2025</div>
<div class="t" style="left:711px;top:822.61px;font-size:15.9px;color:#212529">COMPRA</div>
<div class="t" style="right:859px;top:822.61px;font-size:17px;color:#212529">0,00</div>
<div class="t" style="right:717px;top:822.61px;font-size:17px;color:#212529">0,00</div>
<div class="t" style="right:575px;top:822.61px;font-size:17px;color:#212529">0,00</div>
<div class="t" style="right:433px;top:822.61px;font-size:17px;color:#212529">0,00</div>
<div class="t" style="right:197px;top:822.61px;font-size:17px;color:#212529"><span style="display:inline-block;transform:scaleX(0.78);transform-origin:0 50%;margin-right:-1.3px">1</span>.083,95</div>
<div class="a" style="left:1871px;top:820.41px;width:38px;height:27px;background:#6c757d;border-radius:2px"></div>
<svg style="left:1883px;top:827.41px" width="15" height="10" viewBox="0 0 15 10"><g fill="#fff"><rect x="0" y="0" width="14.5" height="1.8"/><rect x="0" y="4.1" width="14.5" height="1.8"/><rect x="0" y="8.2" width="14.5" height="1.8"/></g></svg>
<div class="a" style="left:1927px;top:820.41px;width:38px;height:27px;background:#1473c5;border-radius:2px"></div>
<svg style="left:1938px;top:825.41px" width="16" height="16" viewBox="0 0 16 16"><circle cx="6.6" cy="6.3" r="5.4" fill="none" stroke="#fff" stroke-width="1.6"/><line x1="10.5" y1="10.2" x2="14.6" y2="14.3" stroke="#fff" stroke-width="1.6"/></svg>
<div class="a" style="left:14px;top:849.10px;width:1990px;height:34.37px;background:#fafafa"></div>
<svg style="left:29px;top:860.98px" width="7" height="10" viewBox="0 0 7 10"><polyline points="1,0.8 5.6,5 1,9.2" fill="none" stroke="#3d4145" stroke-width="1.5"/></svg>
<div class="t" style="left:49.8px;top:856.98px;font-size:16.9px;color:#212529">43</div>
<div class="a" style="left:237px;top:853.58px;width:99px;height:25px;border-radius:12.5px;background:#218739"></div>
<div class="t" style="left:245.5px;top:856.98px;font-size:16.77px;font-weight:700;color:#fff">Finalizado</div>
<div class="t" style="left:379px;top:856.98px;font-size:16.5px;letter-spacing:0.8px;color:#212529">26/05/2025</div>
<div class="t" style="left:545px;top:856.98px;font-size:16.5px;letter-spacing:0.8px;color:#212529">26/05/2025</div>
<div class="t" style="left:711px;top:856.98px;font-size:15.9px;color:#212529">COMPRA</div>
<div class="t" style="right:859px;top:856.98px;font-size:17px;color:#212529">0,00</div>
<div class="t" style="right:717px;top:856.98px;font-size:17px;color:#212529">0,00</div>
<div class="t" style="right:575px;top:856.98px;font-size:17px;color:#212529">0,00</div>
<div class="t" style="right:433px;top:856.98px;font-size:17px;color:#212529">0,00</div>
<div class="t" style="right:197px;top:856.98px;font-size:17px;color:#212529">3.690,00</div>
<div class="a" style="left:1871px;top:854.78px;width:38px;height:27px;background:#6c757d;border-radius:2px"></div>
<svg style="left:1883px;top:861.78px" width="15" height="10" viewBox="0 0 15 10"><g fill="#fff"><rect x="0" y="0" width="14.5" height="1.8"/><rect x="0" y="4.1" width="14.5" height="1.8"/><rect x="0" y="8.2" width="14.5" height="1.8"/></g></svg>
<div class="a" style="left:1927px;top:854.78px;width:38px;height:27px;background:#1473c5;border-radius:2px"></div>
<svg style="left:1938px;top:859.78px" width="16" height="16" viewBox="0 0 16 16"><circle cx="6.6" cy="6.3" r="5.4" fill="none" stroke="#fff" stroke-width="1.6"/><line x1="10.5" y1="10.2" x2="14.6" y2="14.3" stroke="#fff" stroke-width="1.6"/></svg>
<div class="a" style="left:14px;top:471px;width:1990px;height:1px;background:#dfe2e5"></div>
<div class="a" style="left:14px;top:505px;width:1990px;height:1px;background:#dfe2e5"></div>
<div class="a" style="left:14px;top:539px;width:1990px;height:1px;background:#dfe2e5"></div>
<div class="a" style="left:14px;top:574px;width:1990px;height:1px;background:#dfe2e5"></div>
<div class="a" style="left:14px;top:608px;width:1990px;height:1px;background:#dfe2e5"></div>
<div class="a" style="left:14px;top:642px;width:1990px;height:1px;background:#dfe2e5"></div>
<div class="a" style="left:14px;top:677px;width:1990px;height:1px;background:#dfe2e5"></div>
<div class="a" style="left:14px;top:711px;width:1990px;height:1px;background:#dfe2e5"></div>
<div class="a" style="left:14px;top:746px;width:1990px;height:1px;background:#dfe2e5"></div>
<div class="a" style="left:14px;top:780px;width:1990px;height:1px;background:#dfe2e5"></div>
<div class="a" style="left:14px;top:814px;width:1990px;height:1px;background:#dfe2e5"></div>
<div class="a" style="left:14px;top:849px;width:1990px;height:1px;background:#dfe2e5"></div>
<div class="a" style="left:14px;top:883px;width:1990px;height:1px;background:#dfe2e5"></div>
<div class="a" style="left:225.5px;top:394px;width:1px;height:489.46px;background:#dfe2e5"></div>
<div class="a" style="left:1719px;top:394px;width:1px;height:489.46px;background:#dfe2e5"></div>
<div class="t" style="left:24.1px;top:404.3px;font-size:16.5px;font-weight:700;color:#686c71">Nº</div>
<svg style="left:206.5px;top:409px" width="3" height="11" viewBox="0 0 3 11"><g fill="#5f6469"><circle cx="1.5" cy="1.2" r="1.1"/><circle cx="1.5" cy="5.5" r="1.1"/><circle cx="1.5" cy="9.8" r="1.1"/></g></svg>
<div class="t" style="left:237.3px;top:404.3px;font-size:16.95px;font-weight:700;color:#686c71">Status</div>
<svg style="left:348.5px;top:409px" width="3" height="11" viewBox="0 0 3 11"><g fill="#5f6469"><circle cx="1.5" cy="1.2" r="1.1"/><circle cx="1.5" cy="5.5" r="1.1"/><circle cx="1.5" cy="9.8" r="1.1"/></g></svg>
<div class="t" style="left:379.3px;top:404.3px;font-size:16.24px;font-weight:700;color:#686c71">Emissão</div>
<svg style="left:514.5px;top:409px" width="3" height="11" viewBox="0 0 3 11"><g fill="#5f6469"><circle cx="1.5" cy="1.2" r="1.1"/><circle cx="1.5" cy="5.5" r="1.1"/><circle cx="1.5" cy="9.8" r="1.1"/></g></svg>
<div class="t" style="left:545.4px;top:404.3px;font-size:16.65px;font-weight:700;color:#686c71">Entrada</div>
<svg style="left:680.5px;top:409px" width="3" height="11" viewBox="0 0 3 11"><g fill="#5f6469"><circle cx="1.5" cy="1.2" r="1.1"/><circle cx="1.5" cy="5.5" r="1.1"/><circle cx="1.5" cy="9.8" r="1.1"/></g></svg>
<div class="t" style="left:711px;top:404.3px;font-size:16.6px;font-weight:700;color:#686c71">Natureza operação</div>
<svg style="left:1036.5px;top:409px" width="3" height="11" viewBox="0 0 3 11"><g fill="#5f6469"><circle cx="1.5" cy="1.2" r="1.1"/><circle cx="1.5" cy="5.5" r="1.1"/><circle cx="1.5" cy="9.8" r="1.1"/></g></svg>
<div class="t" style="left:1067.2px;top:404.3px;font-size:16.45px;font-weight:700;color:#686c71">Base ICMS</div>
<svg style="left:1178.5px;top:409px" width="3" height="11" viewBox="0 0 3 11"><g fill="#5f6469"><circle cx="1.5" cy="1.2" r="1.1"/><circle cx="1.5" cy="5.5" r="1.1"/><circle cx="1.5" cy="9.8" r="1.1"/></g></svg>
<div class="t" style="left:1209.6px;top:404.3px;font-size:16.73px;font-weight:700;color:#686c71">Valor ICMS</div>
<svg style="left:1320.5px;top:409px" width="3" height="11" viewBox="0 0 3 11"><g fill="#5f6469"><circle cx="1.5" cy="1.2" r="1.1"/><circle cx="1.5" cy="5.5" r="1.1"/><circle cx="1.5" cy="9.8" r="1.1"/></g></svg>
<div class="t" style="left:1351px;top:404.3px;font-size:16.6px;font-weight:700;color:#686c71">Base ICM...</div>
<svg style="left:1462.5px;top:409px" width="3" height="11" viewBox="0 0 3 11"><g fill="#5f6469"><circle cx="1.5" cy="1.2" r="1.1"/><circle cx="1.5" cy="5.5" r="1.1"/><circle cx="1.5" cy="9.8" r="1.1"/></g></svg>
<div class="t" style="left:1493px;top:404.3px;font-size:16.6px;font-weight:700;color:#686c71">Valor ICM...</div>
<svg style="left:1604.5px;top:409px" width="3" height="11" viewBox="0 0 3 11"><g fill="#5f6469"><circle cx="1.5" cy="1.2" r="1.1"/><circle cx="1.5" cy="5.5" r="1.1"/><circle cx="1.5" cy="9.8" r="1.1"/></g></svg>
<div class="t" style="left:1636px;top:404.3px;font-size:16.65px;font-weight:700;color:#686c71">Valor IPI</div>
<div class="t" style="left:1730.8px;top:404.3px;font-size:16.92px;font-weight:700;color:#686c71">Valor total</div>
<svg style="left:1841.5px;top:409px" width="3" height="11" viewBox="0 0 3 11"><g fill="#5f6469"><circle cx="1.5" cy="1.2" r="1.1"/><circle cx="1.5" cy="5.5" r="1.1"/><circle cx="1.5" cy="9.8" r="1.1"/></g></svg>
<div class="t" style="left:1873px;top:404.3px;font-size:16.19px;font-weight:700;color:#686c71">Ações</div>
<svg style="left:1984.5px;top:409px" width="3" height="11" viewBox="0 0 3 11"><g fill="#5f6469"><circle cx="1.5" cy="1.2" r="1.1"/><circle cx="1.5" cy="5.5" r="1.1"/><circle cx="1.5" cy="9.8" r="1.1"/></g></svg>
<svg style="left:457px;top:407px" width="9" height="13" viewBox="0 0 9 13"><line x1="4.5" y1="0.5" x2="4.5" y2="12" stroke="#62676c" stroke-width="1.5"/><polyline points="0.8,8 4.5,11.8 8.2,8" fill="none" stroke="#62676c" stroke-width="1.5"/></svg>
<div class="a" style="left:367.5px;top:405px;width:2px;height:18px;background:#e3e6e8"></div>
<div class="a" style="left:367.5px;top:443px;width:2px;height:18px;background:#e3e6e8"></div>
<div class="a" style="left:533.5px;top:405px;width:2px;height:18px;background:#e3e6e8"></div>
<div class="a" style="left:533.5px;top:443px;width:2px;height:18px;background:#e3e6e8"></div>
<div class="a" style="left:699px;top:405px;width:2px;height:18px;background:#e3e6e8"></div>
<div class="a" style="left:699px;top:443px;width:2px;height:18px;background:#e3e6e8"></div>
<div class="a" style="left:1055px;top:405px;width:2px;height:18px;background:#e3e6e8"></div>
<div class="a" style="left:1055px;top:443px;width:2px;height:18px;background:#e3e6e8"></div>
<div class="a" style="left:1197px;top:405px;width:2px;height:18px;background:#e3e6e8"></div>
<div class="a" style="left:1197px;top:443px;width:2px;height:18px;background:#e3e6e8"></div>
<div class="a" style="left:1339px;top:405px;width:2px;height:18px;background:#e3e6e8"></div>
<div class="a" style="left:1339px;top:443px;width:2px;height:18px;background:#e3e6e8"></div>
<div class="a" style="left:1481px;top:405px;width:2px;height:18px;background:#e3e6e8"></div>
<div class="a" style="left:1481px;top:443px;width:2px;height:18px;background:#e3e6e8"></div>
<div class="a" style="left:1623.5px;top:405px;width:2px;height:18px;background:#e3e6e8"></div>
<div class="a" style="left:1623.5px;top:443px;width:2px;height:18px;background:#e3e6e8"></div>
<div class="a" style="left:1861px;top:405px;width:2px;height:18px;background:#e3e6e8"></div>
<div class="a" style="left:1861px;top:443px;width:2px;height:18px;background:#e3e6e8"></div>
<div class="a" style="left:24px;top:438px;width:167px;height:28px;background:#fff;border:2px solid #e0e3e6"></div>
<svg style="left:202px;top:446px" width="13" height="12" viewBox="0 0 13 12"><path d="M0.9 1.2 H12.1 L7.8 6.2 L7.3 10 L5.3 11.2 L5.3 6.2 Z" fill="none" stroke="#63686c" stroke-width="1.35" stroke-linejoin="round"/></svg>
<div class="a" style="left:237px;top:438px;width:96px;height:28px;background:#efefef;border:2px solid #e0e3e6"></div>
<svg style="left:344px;top:446px" width="13" height="12" viewBox="0 0 13 12"><path d="M0.9 1.2 H12.1 L7.8 6.2 L7.3 10 L5.3 11.2 L5.3 6.2 Z" fill="none" stroke="#63686c" stroke-width="1.35" stroke-linejoin="round"/></svg>
<div class="a" style="left:379px;top:438px;width:120px;height:28px;background:#fff;border:2px solid #e0e3e6"></div>
<div class="a" style="left:545px;top:438px;width:120px;height:28px;background:#fff;border:2px solid #e0e3e6"></div>
<svg style="left:676px;top:446px" width="13" height="12" viewBox="0 0 13 12"><path d="M0.9 1.2 H12.1 L7.8 6.2 L7.3 10 L5.3 11.2 L5.3 6.2 Z" fill="none" stroke="#63686c" stroke-width="1.35" stroke-linejoin="round"/></svg>
<div class="a" style="left:711px;top:438px;width:309px;height:28px;background:#fff;border:2px solid #e0e3e6"></div>
<svg style="left:1031px;top:446px" width="13" height="12" viewBox="0 0 13 12"><path d="M0.9 1.2 H12.1 L7.8 6.2 L7.3 10 L5.3 11.2 L5.3 6.2 Z" fill="none" stroke="#63686c" stroke-width="1.35" stroke-linejoin="round"/></svg>
<div class="a" style="left:1066px;top:438px;width:97px;height:28px;background:#fff;border:2px solid #e0e3e6"></div>
<svg style="left:1174px;top:446px" width="13" height="12" viewBox="0 0 13 12"><path d="M0.9 1.2 H12.1 L7.8 6.2 L7.3 10 L5.3 11.2 L5.3 6.2 Z" fill="none" stroke="#63686c" stroke-width="1.35" stroke-linejoin="round"/></svg>
<div class="a" style="left:1209px;top:438px;width:96px;height:28px;background:#fff;border:2px solid #e0e3e6"></div>
<svg style="left:1316px;top:446px" width="13" height="12" viewBox="0 0 13 12"><path d="M0.9 1.2 H12.1 L7.8 6.2 L7.3 10 L5.3 11.2 L5.3 6.2 Z" fill="none" stroke="#63686c" stroke-width="1.35" stroke-linejoin="round"/></svg>
<div class="a" style="left:1351px;top:438px;width:96px;height:28px;background:#fff;border:2px solid #e0e3e6"></div>
<svg style="left:1458px;top:446px" width="13" height="12" viewBox="0 0 13 12"><path d="M0.9 1.2 H12.1 L7.8 6.2 L7.3 10 L5.3 11.2 L5.3 6.2 Z" fill="none" stroke="#63686c" stroke-width="1.35" stroke-linejoin="round"/></svg>
<div class="a" style="left:1493px;top:438px;width:96px;height:28px;background:#fff;border:2px solid #e0e3e6"></div>
<svg style="left:1600px;top:446px" width="13" height="12" viewBox="0 0 13 12"><path d="M0.9 1.2 H12.1 L7.8 6.2 L7.3 10 L5.3 11.2 L5.3 6.2 Z" fill="none" stroke="#63686c" stroke-width="1.35" stroke-linejoin="round"/></svg>
<div class="a" style="left:1635px;top:438px;width:84px;height:28px;background:#fff;border:2px solid #e0e3e6;border-right:none"></div>
<div class="a" style="left:1730px;top:438px;width:96px;height:28px;background:#fff;border:2px solid #e0e3e6"></div>
<svg style="left:1838.5px;top:446px" width="13" height="12" viewBox="0 0 13 12"><path d="M0.9 1.2 H12.1 L7.8 6.2 L7.3 10 L5.3 11.2 L5.3 6.2 Z" fill="none" stroke="#63686c" stroke-width="1.35" stroke-linejoin="round"/></svg>
<svg style="left:510px;top:446px" width="13" height="12" viewBox="0 0 13 12"><path d="M0.9 1.2 H12.1 L7.8 6.2 L7.3 10 L5.3 11.2 L5.3 6.2 Z" fill="none" stroke="#1b8cf0" stroke-width="1.35" stroke-linejoin="round"/></svg>
<div class="a" style="left:519.5px;top:441px;width:7px;height:7px;border-radius:50%;background:#1b8cf0"></div>
<svg style="left:385px;top:446px" width="12" height="12" viewBox="0 0 12 12"><circle cx="5" cy="5" r="4" fill="none" stroke="#5a5f64" stroke-width="1.4"/><line x1="8" y1="8" x2="11.3" y2="11.3" stroke="#5a5f64" stroke-width="1.4"/></svg>
<svg style="left:551px;top:446px" width="12" height="12" viewBox="0 0 12 12"><circle cx="5" cy="5" r="4" fill="none" stroke="#5a5f64" stroke-width="1.4"/><line x1="8" y1="8" x2="11.3" y2="11.3" stroke="#5a5f64" stroke-width="1.4"/></svg>
<div class="a" style="left:381px;top:440px;width:117px;height:24px;overflow:hidden"><div class="t" style="left:23.8px;top:3px;font-size:16.5px;letter-spacing:1.4px;color:#212529">28/02/2025</div></div>
<div class="a" style="left:547px;top:440px;width:117px;height:24px;overflow:hidden"><div class="t" style="left:24px;top:3px;font-size:16.5px;letter-spacing:1.4px;color:#a9b0b6">11<span style="color:#212529">/</span>03<span style="color:#212529">/</span>2026</div></div>
<div class="a" style="left:2004px;top:394px;width:30px;height:842px;background:#f9fafa"></div>
<div class="a" style="left:2003px;top:394px;width:2px;height:842px;background:#e2e4e5"></div>
<div class="a" style="left:2004px;top:412.5px;width:30px;height:1px;background:#dfe2e5"></div>
<div class="a" style="left:2004px;top:513px;width:30px;height:1.5px;background:#dcdfe2"></div>
<div class="a" style="left:2004px;top:627.5px;width:30px;height:1.5px;background:#dcdfe2"></div>
<div class="a" style="left:2004px;top:805.5px;width:30px;height:1.5px;background:#dcdfe2"></div>
<svg style="left:2013.5px;top:431px" width="13" height="12" viewBox="0 0 13 12"><path d="M0.9 1.2 H12.1 L7.8 6.2 L7.3 10 L5.3 11.2 L5.3 6.2 Z" fill="none" stroke="#2f3235" stroke-width="1.5" stroke-linejoin="round"/></svg>
<div class="a" style="left:2008px;top:452.5px;width:20px;height:46px"><div class="t" style="left:0;top:0;font-size:16.8px;color:#2f3337;transform-origin:0 0;transform:translate(20px,0) rotate(90deg)">Filtros</div></div>
<svg style="left:2013px;top:532px" width="13" height="12" viewBox="0 0 13 12"><g fill="#3a3d40"><rect x="0.1" y="0" width="1.8" height="12" rx="0.9"/><rect x="3.8" y="0" width="1.8" height="12" rx="0.9"/><rect x="7.4" y="0" width="1.8" height="12" rx="0.9"/><rect x="11.1" y="0" width="1.8" height="12" rx="0.9"/></g></svg>
<div class="a" style="left:2008px;top:548px;width:20px;height:66px"><div class="t" style="left:0;top:0;font-size:16.8px;color:#2f3337;transform-origin:0 0;transform:translate(20px,0) rotate(90deg)">Colunas</div></div>
<svg style="left:2012px;top:644.8px" width="15" height="15" viewBox="0 0 15 15"><path d="M1.3 8 V12 A2 2 0 0 0 3.3 14 H11.7 A2 2 0 0 0 13.7 12 V8" fill="none" stroke="#3a3d40" stroke-width="1.7"/><line x1="7.5" y1="0.5" x2="7.5" y2="8" stroke="#55595c" stroke-width="2.2"/><path d="M4.2 7.3 H10.8 L7.5 10.8 Z" fill="#2f3235" stroke="#2f3235" stroke-width="0.8" stroke-linejoin="round"/></svg>
<div class="a" style="left:2008px;top:667.5px;width:20px;height:124px"><div class="t" style="left:0;top:0;font-size:16.8px;color:#2f3337;transform-origin:0 0;transform:translate(20px,0) rotate(90deg)">Personalizações</div></div>
<div class="a" style="left:18px;top:1218px;width:205px;height:13px;background:#f8f8f8;border-top:1px solid #ececec;border-bottom:1px solid #ececec"></div>
<div class="a" style="left:225.5px;top:1216px;width:1px;height:20px;background:#dfe2e5"></div>
<div class="a" style="left:231px;top:1219px;width:1484px;height:12px;border-radius:6px;background:#f1f1f1"></div>
<div class="a" style="left:231px;top:1219px;width:983px;height:13px;border-radius:6.5px;background:#777"></div>
<div class="a" style="left:1719px;top:1216px;width:1px;height:20px;background:#dfe2e5"></div>
<div class="a" style="left:1725px;top:1218px;width:275px;height:13px;background:#f8f8f8;border-top:1px solid #ececec;border-bottom:1px solid #ececec"></div>
<div class="a" style="left:14px;top:1235px;width:2020px;height:1.5px;background:#dcdfe2"></div>
<div class="t" style="left:38.6px;top:1247px;font-size:17.2px;color:#6c7075">Linhas: <span style="font-weight:700;color:#212529;font-size:16.9px">12 de 32</span></div></body></html>
